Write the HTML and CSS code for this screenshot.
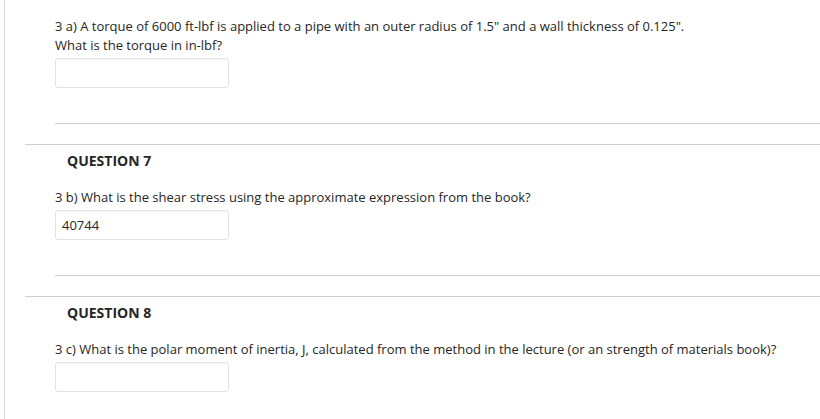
FILE: index.html
```html
<!DOCTYPE html>
<html>
<head>
<meta charset="utf-8">
<link rel="stylesheet" href="styles.css">
</head>
<body>
<div class="page">
  <div class="question first">
    <div class="body">
      <p class="prompt">3 a) A torque of 6000 ft-lbf is applied to a pipe with an outer radius of 1.5" and a wall thickness of 0.125".<br>What is the torque in in-lbf?</p>
      <div class="answer"></div>
      <div class="sep"></div>
    </div>
  </div>
  <div class="question">
    <h3 class="title">QUESTION 7</h3>
    <div class="body">
      <p class="prompt">3 b) What is the shear stress using the approximate expression from the book?</p>
      <div class="answer">40744</div>
      <div class="sep"></div>
    </div>
  </div>
  <div class="question">
    <h3 class="title">QUESTION 8</h3>
    <div class="body">
      <p class="prompt">3 c) What is the polar moment of inertia, J, calculated from the method in the lecture (or an strength of materials book)?</p>
      <div class="answer"></div>
    </div>
  </div>
</div>
</body>
</html>
```
FILE: styles.css
```css
html, body {
  margin: 0;
  padding: 0;
  background: #fff;
}
body {
  font-family: "Open Sans", "Liberation Sans", sans-serif;
  font-size: 13px;
  color: #262626;
  overflow: hidden;
}
.page {
  margin-left: 4px;
  border-left: 1px solid #d6d6d6;
  height: 419px;
}
.question {
  margin-left: 20px;
  border-top: 1px solid #cfcfcf;
}
.question.first {
  border-top: none;
  padding-top: 17px;
}
.title {
  margin: 0;
  padding: 6px 0 0 42px;
  font-size: 14px;
  font-weight: 700;
  line-height: 19px;
  color: #262626;
}
.body {
  padding-left: 30px;
}
.title + .body {
  padding-top: 18px;
}
.prompt {
  margin: 0;
  line-height: 19px;
}
.answer {
  margin-top: 3px;
  width: 166px;
  height: 28px;
  border: 1px solid #e2e2e2;
  border-radius: 3px;
  box-sizing: content-box;
  padding: 0 0 0 6px;
  line-height: 28px;
  font-size: 13px;
  box-shadow: inset 0 1px 1px rgba(0,0,0,0.03);
}
.sep {
  margin-top: 35px;
  margin-bottom: 20px;
  border-top: 1px solid #cfcfcf;
}
```
